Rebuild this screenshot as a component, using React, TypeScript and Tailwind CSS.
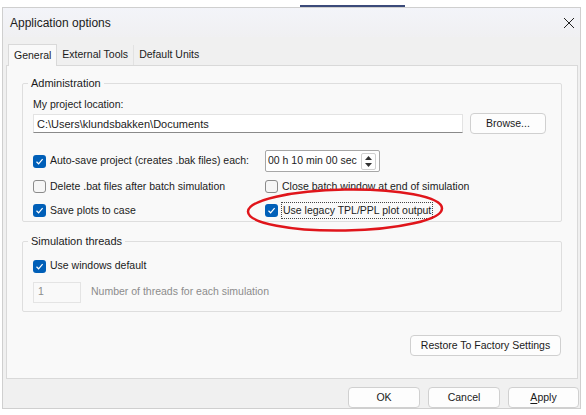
const Check = ({ checked }: { checked: boolean }) =>
  checked ? (
    <span className="flex h-[13px] w-[13px] shrink-0 items-center justify-center rounded-[3px] bg-[#005fb8]">
      <svg width="9" height="9" viewBox="0 0 9 9">
        <path d="M1.5 4.8 L3.6 6.8 L7.6 2.2" fill="none" stroke="white" strokeWidth="1.2" />
      </svg>
    </span>
  ) : (
    <span className="h-[13px] w-[13px] shrink-0 rounded-[3px] border border-[#8b8b8b] bg-[#f6f6f6]" />
  );

const Option = ({ checked, label, focus }: { checked: boolean; label: string; focus?: boolean }) => (
  <div className="flex h-[19px] items-center gap-[3px] whitespace-nowrap">
    <Check checked={checked} />
    <span className={focus ? "border border-dotted border-[#444] px-[1px] leading-[15px]" : "px-[1px]"}>{label}</span>
  </div>
);

const Btn = ({ children, className }: { children: React.ReactNode; className?: string }) => (
  <button className={"h-[21px] rounded-[4px] border border-[#d0d0d0] bg-[#fdfdfd] text-[#1a1a1a] " + (className ?? "")}>
    {children}
  </button>
);

export default function App() {
  return (
    <div
      className="relative h-[415px] w-[586px] overflow-hidden bg-white text-[10.5px] text-[#1b1b1b]"
      style={{ fontFamily: '"Liberation Sans", Arial, sans-serif' }}
    >
      {/* window behind */}
      <div className="flex h-[7px]">
        <div className="ml-[300px] mt-[5px] h-[2px] w-[105px] bg-[#3b4a7a]" />
      </div>

      <div className="ml-[2px] flex h-[402px] w-[579px] flex-col border border-[#cfcfcf] bg-[#f0f0f0]">
        {/* title bar */}
        <div className="flex h-[29px] items-center justify-between bg-gradient-to-b from-[#f3f4f9] to-[#f0f0f2] pl-[7px] pr-[5px]">
          <span className="text-[12px]">Application options</span>
          <svg width="12" height="12" viewBox="0 0 12 12">
            <path d="M1 1 L11 11 M11 1 L1 11" stroke="#222" strokeWidth="1" />
          </svg>
        </div>

        {/* tabs */}
        <div className="h-[7px]" />
        <div className="flex items-end pl-[5px]">
          <div className="relative z-10 -mb-px flex h-[22px] items-center border border-b-0 border-[#d9d9d9] bg-[#f9f9f9] px-[5px]">
            General
          </div>
          <div className="flex h-[20px] items-center border-r border-[#e2e2e2] px-[5px]">External Tools</div>
          <div className="flex h-[20px] items-center px-[5px]">Default Units</div>
        </div>

        {/* tab panel */}
        <div className="ml-[3px] mr-[2px] flex h-[314px] flex-col border border-[#d9d9d9] bg-[#f9f9f9] px-[15px] pt-[9px]">
          <fieldset className="h-[147px] rounded-[2px] border border-[#dedede] px-[10px]">
            <legend className="-ml-[5px] px-[3px] text-[11px]">Administration</legend>
            <div className="mt-[5px]">My project location:</div>
            <div className="mt-[1px] flex items-center gap-[7px]">
              <div className="flex h-[19px] w-[430px] items-center border border-[#e3e3e3] border-b-[#8a8a8a] bg-white px-[3px] text-[11px]">
                C:\Users\klundsbakken\Documents
              </div>
              <Btn className="w-[76px]">Browse...</Btn>
            </div>

            <div className="mt-[16px] grid grid-cols-[232px_1fr] gap-y-[5px]">
              <div className="flex h-[22px] items-center">
                <Option checked label="Auto-save project (creates .bak files) each:" />
              </div>
              <div className="flex h-[22px] w-[115px] items-center justify-between whitespace-nowrap rounded-[2px] border border-[#a7a7a7] bg-white pl-[2px] pr-[3px]">
                <span>00 h 10 min 00 sec</span>
                <span className="flex h-[17px] w-[15px] flex-col items-center justify-center gap-[3px] rounded-[2px] border border-[#d0d0d0]">
                  <svg width="7" height="4" viewBox="0 0 7 4"><path d="M0 4 L3.5 0 L7 4Z" fill="#333" /></svg>
                  <svg width="7" height="4" viewBox="0 0 7 4"><path d="M0 0 L3.5 4 L7 0Z" fill="#333" /></svg>
                </span>
              </div>
              <Option checked={false} label="Delete .bat files after batch simulation" />
              <Option checked={false} label="Close batch window at end of simulation" />
              <Option checked label="Save plots to case" />
              <Option checked label="Use legacy TPL/PPL plot output" focus />
            </div>
          </fieldset>

          <fieldset className="mt-[11px] h-[79px] rounded-[2px] border border-[#dedede] px-[10px]">
            <legend className="-ml-[5px] px-[3px] text-[11px]">Simulation threads</legend>
            <div className="mt-[7px]">
              <Option checked label="Use windows default" />
            </div>
            <div className="mt-[6px] flex items-center gap-[10px] text-[#8c8c8c]">
              <div className="flex h-[21px] w-[48px] items-center border border-[#e4e4e4] px-[4px]">1</div>
              <span>Number of threads for each simulation</span>
            </div>
          </fieldset>

          <div className="mt-[23px] flex justify-end pr-[1px]">
            <Btn className="w-[151px]">Restore To Factory Settings</Btn>
          </div>
        </div>

        {/* dialog buttons */}
        <div className="mt-[8px] flex justify-end gap-[8px] pr-[1px]">
          <Btn className="w-[72px] border-[#0067c0]">OK</Btn>
          <Btn className="w-[72px]">Cancel</Btn>
          <Btn className="w-[71px]">
            <span className="underline underline-offset-2">A</span>pply
          </Btn>
        </div>
      </div>

      {/* red annotation ellipse */}
      <svg className="absolute left-0 top-0" width="586" height="415">
        <ellipse cx="345" cy="210" rx="97" ry="20.5" fill="none" stroke="#e0151b" strokeWidth="2.5" transform="rotate(-1 345 210)" />
      </svg>
    </div>
  );
}
